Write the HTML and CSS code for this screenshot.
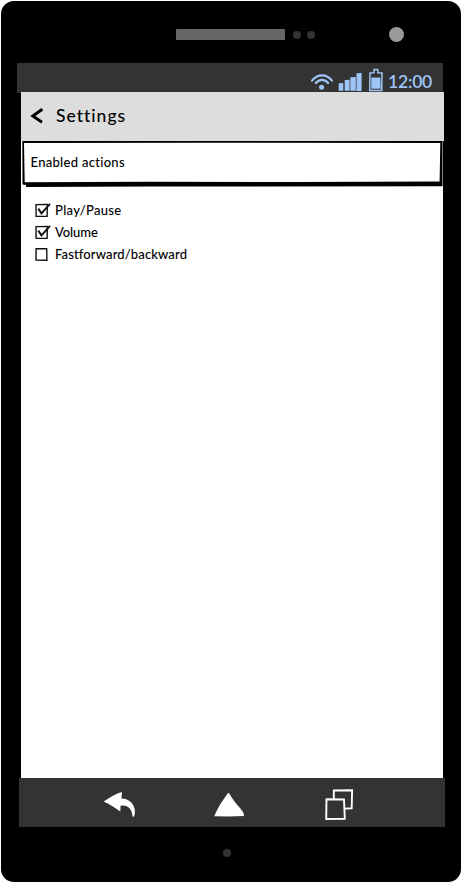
FILE: index.html
```html
<!DOCTYPE html>
<html lang="en">
<head>
<meta charset="utf-8">
<title>Settings</title>
<link rel="stylesheet" href="styles.css">
</head>
<body>
<main class="phone">
  <div class="top-bezel">
    <span class="speaker"></span>
    <span class="sensor"></span>
    <span class="sensor"></span>
    <span class="camera"></span>
  </div>
  <div class="status-bar">
    <svg class="status-icons" width="76" height="26" viewBox="310 67 76 26">
      <g fill="none" stroke="#9fc5f8" stroke-width="2.2" stroke-linecap="round">
        <path d="M312 80.6C317.500 73.500 326.500 73.500 332 80.600"/>
        <path d="M315.800 83C319.400 78.800 324.800 78.800 328.200 83"/>
      </g>
      <g fill="#9fc5f8">
        <circle cx="321.600" cy="87.300" r="2.500"/>
        <path d="M338.700 83.300L343.300 83V90.800H338.700ZM344.700 80L349.600 79.700V90.800H344.700ZM350.300 77.200L355.800 76.900V90.800H350.300ZM356.500 73.300L361.600 73V91H356.500Z"/>
        <path d="M371.300 77.500H380.300L380.600 88.700H371.300Z"/>
      </g>
      <path d="M370 72.900L374 72.700V69.400H377.800V72.700L382 73L381.700 90.500H369.700Z" fill="none" stroke="#9fc5f8" stroke-width="1.500"/>
    </svg>
    <span class="clock">12:00</span>
  </div>
  <div class="screen">
    <header class="title-bar">
      <svg class="back" width="14" height="18" viewBox="30 107.500 14 18">
        <path d="M42.300 109.700L32.800 116.500L42 122.700" fill="none" stroke="#000" stroke-width="2.900"/>
      </svg>
      <h1>Settings</h1>
    </header>
    <section class="section-head">
      <svg class="frame" width="422" height="47" viewBox="21 141 422 47">
        <path d="M22.300 141L442.500 140.500V186.200L150 186.500L26 187V185L22.500 184.500ZM24 143L24.700 182.300L150 181.800L300 182L439.600 181.500L440.300 143L200 142.700Z" fill="#000" fill-rule="evenodd"/>
      </svg>
      <h2>Enabled actions</h2>
    </section>
    <ul class="actions">
      <li>
        <svg class="check" width="18" height="16" viewBox="0 0 18 16"><path d="M1 2.600L12.400 2.400L12.100 14.200L1.100 14.400Z" fill="none" stroke="#111" stroke-width="1.400"/><path d="M3.300 6.600L6.500 11.400L15 1.800" fill="none" stroke="#111" stroke-width="1.900"/></svg>
        <span class="play">Play/Pause</span>
      </li>
      <li>
        <svg class="check" width="18" height="16" viewBox="0 0 18 16"><path d="M1 2.600L12.400 2.400L12.100 14.200L1.100 14.400Z" fill="none" stroke="#111" stroke-width="1.400"/><path d="M3.300 6.600L6.500 11.400L15 1.800" fill="none" stroke="#111" stroke-width="1.900"/></svg>
        <span class="volume">Volume</span>
      </li>
      <li>
        <svg class="check" width="18" height="16" viewBox="0 0 18 16"><path d="M1.100 2.800L11.700 2.600L11.900 14.200L1 14.100Z" fill="none" stroke="#111" stroke-width="1.400"/></svg>
        <span class="forward">Fastforward/backward</span>
      </li>
    </ul>
  </div>
  <nav class="nav-bar">
    <svg width="34" height="30" viewBox="102 789 34 30"><path d="M103.700 801.400C110 797.500 116 793.300 122 792L121.400 798.600C130.500 798.400 137.500 807 134 816.700L132.500 816.500C132.200 809.500 128 804.700 120.600 805.700L120.300 811.500C115.500 808 110 804 103.700 801.400Z" fill="#fff"/></svg>
    <svg width="34" height="30" viewBox="213 789 34 30"><path d="M214.200 816.200C217.500 808 222.500 800.500 228 793L229 793C232.500 799 235.500 803 240 808C242 810.500 244 813 244 816L229 816.600Z" fill="#fff"/></svg>
    <svg width="34" height="34" viewBox="323 787 34 34"><g fill="none" stroke="#fff" stroke-width="1.900"><path d="M333.800 799V790.500L352.100 790.200L351.700 808.300L345 808.600"/><path d="M326.500 799.200L344 799.500L344.800 818.800L326.200 819Z"/></g></svg>
  </nav>
  <div class="bottom-bezel"><span class="mic"></span></div>
</main>
</body>
</html>
```

FILE: styles.css
```css
* { box-sizing: border-box; }
body {
  margin: 0;
  padding: 1px;
  background: #fff;
  color: #000;
  font-family: Lato, "Liberation Sans", sans-serif;
}
svg { display: block; flex: none; }
.phone {
  width: 459.5px;
  height: 880.5px;
  display: flex;
  flex-direction: column;
  background: #000;
  border-radius: 13px;
}
.top-bezel {
  height: 62px;
  flex: none;
  display: flex;
  align-items: center;
  padding: 4px 0 0 175px;
}
.speaker {
  width: 109px;
  height: 11px;
  border-radius: 1px;
  background: #666;
}
.sensor {
  width: 8px;
  height: 8px;
  margin: 2px 0 0 8px;
  border-radius: 50%;
  background: #333;
}
.sensor + .sensor { margin-left: 6px; }
.camera {
  width: 15px;
  height: 15px;
  margin-left: 74px;
  border-radius: 50%;
  background: #999;
}
.status-bar {
  height: 30px;
  flex: none;
  width: 426px;
  margin-left: 16px;
  display: flex;
  justify-content: flex-end;
  background: #333;
  color: #9fc5f8;
}
.status-icons { margin: 4px 2px 0 0; }
.clock {
  width: 55px;
  padding-top: 8px;
  font-size: 17.5px;
  line-height: 22px;
  font-weight: 600;
  letter-spacing: -0.2px;
}
.screen {
  width: 421.5px;
  height: 686px;
  flex: none;
  margin: -1px 0 0 20px;
  background: #fff;
}
.title-bar {
  width: 423px;
  height: 49px;
  display: flex;
  align-items: center;
  gap: 12px;
  padding: 0 0 1px 9px;
  background: #ddd;
}
h1, h2 { margin: 0; font-weight: 500; }
h1 {
  font-size: 17.5px;
  line-height: 24px;
  letter-spacing: 1px;
}
.section-head {
  position: relative;
  height: 46px;
  padding: 12px 0 0 9.5px;
}
.frame { position: absolute; top: 0; left: 0; }
h2 {
  position: relative;
  font-size: 13px;
  line-height: 18px;
  letter-spacing: 0.3px;
}
.actions {
  list-style: none;
  margin: 0;
  padding: 12px 0 0 14px;
}
.actions li {
  height: 22px;
  display: flex;
  align-items: center;
  gap: 2px;
  font-size: 13px;
  line-height: 20px;
  font-weight: 500;
}
.actions span { white-space: nowrap; }
.play { letter-spacing: 0.3px; }
.volume { letter-spacing: -0.1px; }
.forward { letter-spacing: 0.13px; }
.nav-bar {
  width: 426px;
  height: 49px;
  flex: none;
  margin-left: 18px;
  padding: 2px 88px 0 83px;
  display: flex;
  align-items: center;
  justify-content: space-between;
  background: #333;
}
.bottom-bezel {
  flex: 1;
  display: flex;
  padding: 22px 0 0 222px;
}
.mic {
  width: 7.5px;
  height: 7.5px;
  border-radius: 50%;
  background: #333;
}
```
